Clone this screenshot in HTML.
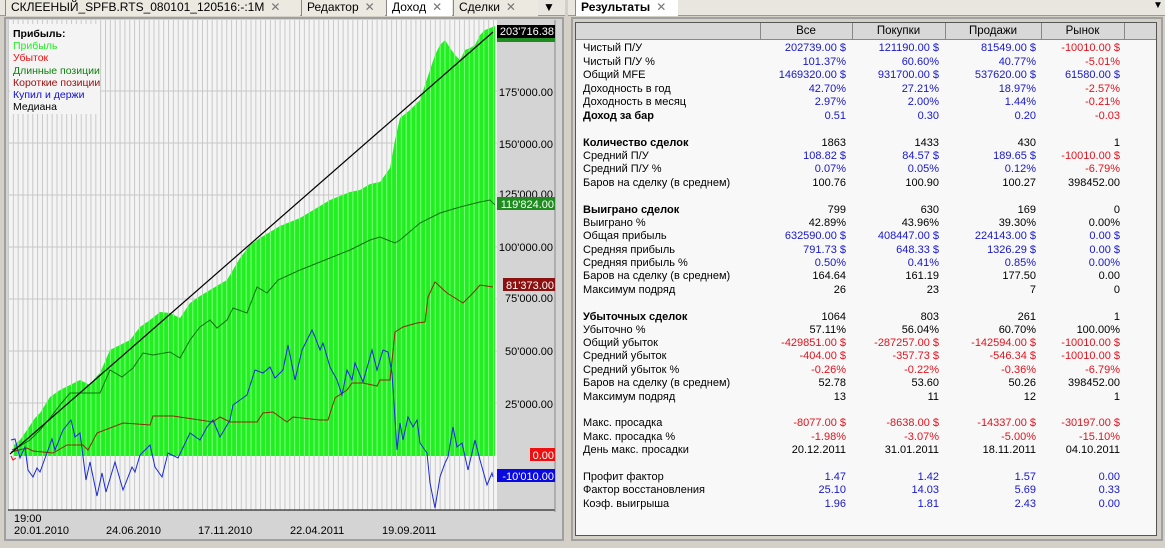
<!DOCTYPE html>
<html><head><meta charset="utf-8"><style>
*{margin:0;padding:0;box-sizing:border-box}
body{width:1165px;height:548px;background:#d4d0c8;font-family:"Liberation Sans","DejaVu Sans",sans-serif;font-size:11px;position:relative;overflow:hidden;color:#000}
.abs{position:absolute}
.tab{position:absolute;top:0;height:16px;font-size:12px;line-height:15px;padding-left:5px;border-left:1px solid #888;background:#ece9e0}
.x{color:#777;margin-left:6px}
.row{position:absolute;left:583px;height:13px;line-height:13px;white-space:nowrap}
.v{position:absolute;top:0;text-align:right}
.b{color:#1818c8}.r{color:#e0141e}
</style></head><body>
<div class="abs" style="left:0;top:0;width:565px;height:16px;background:#e8e6de;border-bottom:1px solid #999"></div>
<div class="tab" style="left:5px;width:295px">СКЛЕЕНЫЙ_SPFB.RTS_080101_120516:-:1M<span class="x">✕</span></div>
<div class="tab" style="left:301px;width:84px">Редактор<span class="x">✕</span></div>
<div class="tab" style="left:386px;width:66px;background:#fff">Доход<span class="x">✕</span></div>
<div class="tab" style="left:453px;width:85px">Сделки<span class="x">✕</span></div>
<div class="abs" style="left:543px;top:0;font-size:12px">▼</div>
<div class="abs" style="left:4px;top:17px;width:560px;height:524px;border:2px solid #a0a0a0;background:#d4d4d4"></div>
<svg class="abs" style="left:8px;top:20px" width="548" height="518" viewBox="8 20 548 518">
<defs><pattern id="g" x="8" y="0" width="4.85" height="10" patternUnits="userSpaceOnUse"><rect x="0" y="0" width="1" height="10" fill="#c8c8c8"/></pattern>
<pattern id="g2" x="8" y="0" width="4.85" height="10" patternUnits="userSpaceOnUse"><rect x="0" y="0" width="1" height="10" fill="#7cff7c"/></pattern></defs>
<rect x="8" y="20" width="489" height="490" fill="#f4f4f4"/>
<rect x="8" y="20" width="489" height="490" fill="url(#g)"/>
<g stroke="#c8c8c8" stroke-width="1">
<line x1="8" y1="91" x2="497" y2="91"/><line x1="8" y1="143" x2="497" y2="143"/><line x1="8" y1="195" x2="497" y2="195"/><line x1="8" y1="247" x2="497" y2="247"/><line x1="8" y1="299" x2="497" y2="299"/><line x1="8" y1="351" x2="497" y2="351"/><line x1="8" y1="403" x2="497" y2="403"/>
</g>
<g id="envg">
<polygon fill="#22ee22" points="14,456 14,445 20,440 27,430 35,418 40,413 50,397 60,390 70,385 80,380 90,385 95,378 100,373 110,350 120,345 130,340 140,327 150,320 160,312 170,313 180,318 190,303 200,296 210,290 220,284 227,280 240,258 250,245 260,238 270,232 280,226 290,222 300,218 310,212 320,206 330,200 340,196 350,192 360,190 370,184 380,182 390,168 395,140 400,118 410,110 420,100 425,85 430,70 435,55 440,45 445,40 450,48 455,55 460,60 465,50 470,48 475,45 480,35 485,30 490,28 495,26 495,456"/>
<polygon fill="url(#g2)" points="14,456 14,445 20,440 27,430 35,418 40,413 50,397 60,390 70,385 80,380 90,385 95,378 100,373 110,350 120,345 130,340 140,327 150,320 160,312 170,313 180,318 190,303 200,296 210,290 220,284 227,280 240,258 250,245 260,238 270,232 280,226 290,222 300,218 310,212 320,206 330,200 340,196 350,192 360,190 370,184 380,182 390,168 395,140 400,118 410,110 420,100 425,85 430,70 435,55 440,45 445,40 450,48 455,55 460,60 465,50 470,48 475,45 480,35 485,30 490,28 495,26 495,456"/>
</g>
<polyline fill="none" stroke="#107010" stroke-width="1" points="12,450 20,446 30,440 40,430 50,418 60,405 70,393 87,393 100,393 110,370 122,377 133,368 143,353 153,355 170,352 180,358 190,340 200,327 210,320 217,328 227,320 233,308 247,313 257,287 267,293 278,280 300,270 330,258 350,250 370,240 380,237 395,243 400,240 420,223 440,213 460,207 480,202 490,200 495,205"/>
<polyline fill="none" stroke="#8b2a0a" stroke-width="1" points="11,452 27,448 33,451 53,453 67,445 83,445 88,450 97,433 123,423 150,425 153,416 173,416 213,422 220,417 230,422 257,422 263,413 273,412 287,422 293,417 320,420 328,420 335,398 347,390 352,383 363,383 377,386 380,380 390,380 395,332 403,327 417,323 425,322 428,297 435,282 447,293 463,303 473,293 480,285 493,287"/>
<polyline fill="none" stroke="#1a2ad8" stroke-width="1" points="11,440 15,439 20,458 25,447 28,470 33,477 37,468 40,472 52,439 55,450 63,430 71,420 75,437 80,433 86,480 90,462 97,496 102,473 106,492 115,462 123,490 132,467 135,472 140,455 150,445 155,467 162,477 168,453 178,458 190,433 200,440 207,427 213,420 220,437 230,420 233,405 247,395 255,370 263,373 270,367 275,378 283,370 288,345 295,380 302,350 312,330 315,337 320,350 323,343 330,367 337,380 342,395 347,370 352,380 355,363 363,382 372,350 377,370 383,350 388,352 392,373 397,450 400,423 403,440 408,417 413,427 417,420 420,443 427,453 430,483 435,508 440,477 445,463 448,457 453,427 457,447 462,443 468,470 475,440 480,460 487,485 492,473 493,477"/>
<polyline fill="none" stroke="#e01010" stroke-width="1" points="11,456 13,460 16,458"/>
<line x1="10" y1="454" x2="493" y2="32" stroke="#000" stroke-width="1.2"/>
<rect x="497" y="20" width="58" height="490" fill="#d4d4d4"/>
<line x1="8" y1="510" x2="555" y2="510" stroke="#000"/>
<line x1="555" y1="20" x2="555" y2="512" stroke="#888"/>
<g font-family="Liberation Sans,DejaVu Sans,sans-serif" font-size="11" text-anchor="end">
<text x="553" y="96">175'000.00</text>
<text x="553" y="148">150'000.00</text>
<text x="553" y="198">125'000.00</text>
<text x="553" y="251">100'000.00</text>
<text x="553" y="302">75'000.00</text>
<text x="553" y="355">50'000.00</text>
<text x="553" y="408">25'000.00</text>
</g>
<rect x="497" y="25" width="58" height="13" fill="#000"/>
<rect x="497" y="38" width="58" height="4" fill="#1f8c1f"/>
<rect x="497" y="197" width="58" height="13" fill="#1f8c1f"/>
<rect x="503" y="278" width="52" height="13" fill="#8b1010"/>
<rect x="530" y="448" width="25" height="13" fill="#ee1010"/>
<rect x="497" y="469" width="58" height="13" fill="#0a0ae0"/>
<g font-family="Liberation Sans,DejaVu Sans,sans-serif" font-size="11" text-anchor="end" fill="#fff">
<text x="554" y="35">203'716.38</text>
<text x="554" y="208">119'824.00</text>
<text x="554" y="289">81'373.00</text>
<text x="554" y="459">0.00</text>
<text x="554" y="480">-10'010.00</text>
</g>
<g font-family="Liberation Sans,DejaVu Sans,sans-serif" font-size="11">
<text x="14" y="522">19:00</text>
<text x="14" y="534">20.01.2010</text>
<text x="106" y="534">24.06.2010</text>
<text x="198" y="534">17.11.2010</text>
<text x="290" y="534">22.04.2011</text>
<text x="382" y="534">19.09.2011</text>
</g>
<rect x="10" y="24" width="90" height="90" fill="#f4f4f4"/>
<g font-family="Liberation Sans,DejaVu Sans,sans-serif" font-size="10.5">
<text x="13" y="37" font-weight="bold">Прибыль:</text>
<text x="13" y="49" fill="#22ee22">Прибыль</text>
<text x="13" y="61" fill="#ee1010">Убыток</text>
<text x="13" y="74" fill="#108010">Длинные позиции</text>
<text x="13" y="86" fill="#a01010">Короткие позиции</text>
<text x="13" y="98" fill="#1010d0">Купил и держи</text>
<text x="13" y="110">Медиана</text>
</g>
</svg>
<div class="abs" style="left:568px;top:0;width:597px;height:16px;background:#e8e6de;border-bottom:1px solid #999"></div>
<div class="tab" style="left:575px;width:103px;background:#fff;font-weight:bold">Результаты<span class="x" style="font-weight:normal">✕</span></div>
<div class="abs" style="left:1153px;top:0;font-size:10px">▼</div>
<div class="abs" style="left:571px;top:17px;width:592px;height:524px;border:2px solid #a0a0a0;background:#d4d0c8"></div>
<div class="abs" style="left:575px;top:22px;width:582px;height:514px;border:1px solid #555;background:#f8f8f8"></div>
<div class="abs" style="left:576px;top:23px;width:580px;height:17px;background:#d8d8d8;border-bottom:1px solid #888"></div>
<div class="abs" style="left:760px;top:23px;width:1px;height:17px;background:#888"></div>
<div class="abs" style="left:852px;top:23px;width:1px;height:17px;background:#888"></div>
<div class="abs" style="left:945px;top:23px;width:1px;height:17px;background:#888"></div>
<div class="abs" style="left:1041px;top:23px;width:1px;height:17px;background:#888"></div>
<div class="abs" style="left:1124px;top:23px;width:1px;height:17px;background:#888"></div>
<div class="abs" style="left:760px;top:25px;width:92px;text-align:center;font-size:11.5px">Все</div>
<div class="abs" style="left:852px;top:25px;width:93px;text-align:center;font-size:11.5px">Покупки</div>
<div class="abs" style="left:945px;top:25px;width:96px;text-align:center;font-size:11.5px">Продажи</div>
<div class="abs" style="left:1041px;top:25px;width:83px;text-align:center;font-size:11.5px">Рынок</div>
<div class="row" style="top:42px">Чистый П/У<span class="v b" style="left:170px;width:93px">202739.00 $</span><span class="v b" style="left:263px;width:93px">121190.00 $</span><span class="v b" style="left:356px;width:97px">81549.00 $</span><span class="v r" style="left:453px;width:84px">-10010.00 $</span></div>
<div class="row" style="top:56px">Чистый П/У %<span class="v b" style="left:170px;width:93px">101.37%</span><span class="v b" style="left:263px;width:93px">60.60%</span><span class="v b" style="left:356px;width:97px">40.77%</span><span class="v r" style="left:453px;width:84px">-5.01%</span></div>
<div class="row" style="top:69px">Общий MFE<span class="v b" style="left:170px;width:93px">1469320.00 $</span><span class="v b" style="left:263px;width:93px">931700.00 $</span><span class="v b" style="left:356px;width:97px">537620.00 $</span><span class="v b" style="left:453px;width:84px">61580.00 $</span></div>
<div class="row" style="top:83px">Доходность в год<span class="v b" style="left:170px;width:93px">42.70%</span><span class="v b" style="left:263px;width:93px">27.21%</span><span class="v b" style="left:356px;width:97px">18.97%</span><span class="v r" style="left:453px;width:84px">-2.57%</span></div>
<div class="row" style="top:96px">Доходность в месяц<span class="v b" style="left:170px;width:93px">2.97%</span><span class="v b" style="left:263px;width:93px">2.00%</span><span class="v b" style="left:356px;width:97px">1.44%</span><span class="v r" style="left:453px;width:84px">-0.21%</span></div>
<div class="row" style="top:110px;font-weight:bold">Доход за бар<span class="v b" style="left:170px;width:93px;font-weight:normal">0.51</span><span class="v b" style="left:263px;width:93px;font-weight:normal">0.30</span><span class="v b" style="left:356px;width:97px;font-weight:normal">0.20</span><span class="v r" style="left:453px;width:84px;font-weight:normal">-0.03</span></div>
<div class="row" style="top:137px;font-weight:bold">Количество сделок<span class="v" style="left:170px;width:93px;font-weight:normal">1863</span><span class="v" style="left:263px;width:93px;font-weight:normal">1433</span><span class="v" style="left:356px;width:97px;font-weight:normal">430</span><span class="v" style="left:453px;width:84px;font-weight:normal">1</span></div>
<div class="row" style="top:150px">Средний П/У<span class="v b" style="left:170px;width:93px">108.82 $</span><span class="v b" style="left:263px;width:93px">84.57 $</span><span class="v b" style="left:356px;width:97px">189.65 $</span><span class="v r" style="left:453px;width:84px">-10010.00 $</span></div>
<div class="row" style="top:163px">Средний П/У %<span class="v b" style="left:170px;width:93px">0.07%</span><span class="v b" style="left:263px;width:93px">0.05%</span><span class="v b" style="left:356px;width:97px">0.12%</span><span class="v r" style="left:453px;width:84px">-6.79%</span></div>
<div class="row" style="top:177px">Баров на сделку (в среднем)<span class="v" style="left:170px;width:93px">100.76</span><span class="v" style="left:263px;width:93px">100.90</span><span class="v" style="left:356px;width:97px">100.27</span><span class="v" style="left:453px;width:84px">398452.00</span></div>
<div class="row" style="top:204px;font-weight:bold">Выиграно сделок<span class="v" style="left:170px;width:93px;font-weight:normal">799</span><span class="v" style="left:263px;width:93px;font-weight:normal">630</span><span class="v" style="left:356px;width:97px;font-weight:normal">169</span><span class="v" style="left:453px;width:84px;font-weight:normal">0</span></div>
<div class="row" style="top:217px">Выиграно %<span class="v" style="left:170px;width:93px">42.89%</span><span class="v" style="left:263px;width:93px">43.96%</span><span class="v" style="left:356px;width:97px">39.30%</span><span class="v" style="left:453px;width:84px">0.00%</span></div>
<div class="row" style="top:230px">Общая прибыль<span class="v b" style="left:170px;width:93px">632590.00 $</span><span class="v b" style="left:263px;width:93px">408447.00 $</span><span class="v b" style="left:356px;width:97px">224143.00 $</span><span class="v b" style="left:453px;width:84px">0.00 $</span></div>
<div class="row" style="top:244px">Средняя прибыль<span class="v b" style="left:170px;width:93px">791.73 $</span><span class="v b" style="left:263px;width:93px">648.33 $</span><span class="v b" style="left:356px;width:97px">1326.29 $</span><span class="v b" style="left:453px;width:84px">0.00 $</span></div>
<div class="row" style="top:257px">Средняя прибыль %<span class="v b" style="left:170px;width:93px">0.50%</span><span class="v b" style="left:263px;width:93px">0.41%</span><span class="v b" style="left:356px;width:97px">0.85%</span><span class="v b" style="left:453px;width:84px">0.00%</span></div>
<div class="row" style="top:270px">Баров на сделку (в среднем)<span class="v" style="left:170px;width:93px">164.64</span><span class="v" style="left:263px;width:93px">161.19</span><span class="v" style="left:356px;width:97px">177.50</span><span class="v" style="left:453px;width:84px">0.00</span></div>
<div class="row" style="top:284px">Максимум подряд<span class="v" style="left:170px;width:93px">26</span><span class="v" style="left:263px;width:93px">23</span><span class="v" style="left:356px;width:97px">7</span><span class="v" style="left:453px;width:84px">0</span></div>
<div class="row" style="top:311px;font-weight:bold">Убыточных сделок<span class="v" style="left:170px;width:93px;font-weight:normal">1064</span><span class="v" style="left:263px;width:93px;font-weight:normal">803</span><span class="v" style="left:356px;width:97px;font-weight:normal">261</span><span class="v" style="left:453px;width:84px;font-weight:normal">1</span></div>
<div class="row" style="top:324px">Убыточно %<span class="v" style="left:170px;width:93px">57.11%</span><span class="v" style="left:263px;width:93px">56.04%</span><span class="v" style="left:356px;width:97px">60.70%</span><span class="v" style="left:453px;width:84px">100.00%</span></div>
<div class="row" style="top:337px">Общий убыток<span class="v r" style="left:170px;width:93px">-429851.00 $</span><span class="v r" style="left:263px;width:93px">-287257.00 $</span><span class="v r" style="left:356px;width:97px">-142594.00 $</span><span class="v r" style="left:453px;width:84px">-10010.00 $</span></div>
<div class="row" style="top:350px">Средний убыток<span class="v r" style="left:170px;width:93px">-404.00 $</span><span class="v r" style="left:263px;width:93px">-357.73 $</span><span class="v r" style="left:356px;width:97px">-546.34 $</span><span class="v r" style="left:453px;width:84px">-10010.00 $</span></div>
<div class="row" style="top:364px">Средний убыток %<span class="v r" style="left:170px;width:93px">-0.26%</span><span class="v r" style="left:263px;width:93px">-0.22%</span><span class="v r" style="left:356px;width:97px">-0.36%</span><span class="v r" style="left:453px;width:84px">-6.79%</span></div>
<div class="row" style="top:377px">Баров на сделку (в среднем)<span class="v" style="left:170px;width:93px">52.78</span><span class="v" style="left:263px;width:93px">53.60</span><span class="v" style="left:356px;width:97px">50.26</span><span class="v" style="left:453px;width:84px">398452.00</span></div>
<div class="row" style="top:391px">Максимум подряд<span class="v" style="left:170px;width:93px">13</span><span class="v" style="left:263px;width:93px">11</span><span class="v" style="left:356px;width:97px">12</span><span class="v" style="left:453px;width:84px">1</span></div>
<div class="row" style="top:417px">Макс. просадка<span class="v r" style="left:170px;width:93px">-8077.00 $</span><span class="v r" style="left:263px;width:93px">-8638.00 $</span><span class="v r" style="left:356px;width:97px">-14337.00 $</span><span class="v r" style="left:453px;width:84px">-30197.00 $</span></div>
<div class="row" style="top:431px">Макс. просадка %<span class="v r" style="left:170px;width:93px">-1.98%</span><span class="v r" style="left:263px;width:93px">-3.07%</span><span class="v r" style="left:356px;width:97px">-5.00%</span><span class="v r" style="left:453px;width:84px">-15.10%</span></div>
<div class="row" style="top:444px">День макс. просадки<span class="v" style="left:170px;width:93px">20.12.2011</span><span class="v" style="left:263px;width:93px">31.01.2011</span><span class="v" style="left:356px;width:97px">18.11.2011</span><span class="v" style="left:453px;width:84px">04.10.2011</span></div>
<div class="row" style="top:471px">Профит фактор<span class="v b" style="left:170px;width:93px">1.47</span><span class="v b" style="left:263px;width:93px">1.42</span><span class="v b" style="left:356px;width:97px">1.57</span><span class="v b" style="left:453px;width:84px">0.00</span></div>
<div class="row" style="top:484px">Фактор восстановления<span class="v b" style="left:170px;width:93px">25.10</span><span class="v b" style="left:263px;width:93px">14.03</span><span class="v b" style="left:356px;width:97px">5.69</span><span class="v b" style="left:453px;width:84px">0.33</span></div>
<div class="row" style="top:498px">Коэф. выигрыша<span class="v b" style="left:170px;width:93px">1.96</span><span class="v b" style="left:263px;width:93px">1.81</span><span class="v b" style="left:356px;width:97px">2.43</span><span class="v b" style="left:453px;width:84px">0.00</span></div>
</body></html>
